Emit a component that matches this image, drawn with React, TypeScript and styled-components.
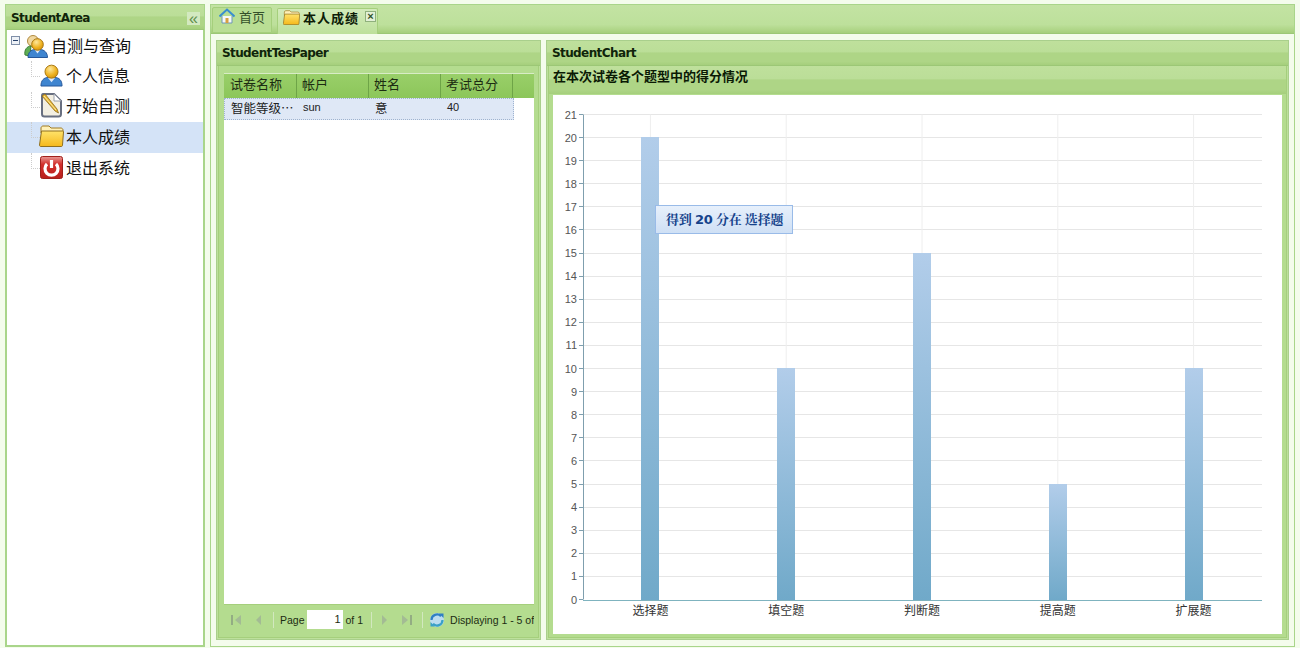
import React from 'react';
import styled, { createGlobalStyle } from 'styled-components';

const CJK = '"Noto Sans CJK SC", "Liberation Sans", sans-serif';
const BOLD_CJK = '"DejaVu Sans", "Noto Serif CJK SC", "Noto Sans CJK SC", sans-serif';

const GlobalStyle = createGlobalStyle`
	html, body {
		margin: 0;
		padding: 0;
		background: #f4fcec;
	}
	* {
		box-sizing: border-box;
	}
`;

// ---- icons ----

function UserIcon({ size = 23 }: { size?: number }): JSX.Element {
	return (
		<svg width={size} height={size} viewBox="0 0 24 24">
			<defs>
				<radialGradient id="headFill" cx="0.4" cy="0.3" r="0.8">
					<stop offset="0" stopColor="#fde79a" />
					<stop offset="0.6" stopColor="#eeb11e" />
					<stop offset="1" stopColor="#c98a10" />
				</radialGradient>
			</defs>
			<path d="M1 23c0-6 3-9 8-9h6c5 0 8 3 8 9z" fill="#3f85d0" stroke="#26579a" />
			<path d="M8 14l4 5 4-5z" fill="#dfeafa" />
			<circle cx="12" cy="8" r="6.800" fill="url(#headFill)" stroke="#a8760f" />
		</svg>
	);
}

function GroupIcon(): JSX.Element {
	return (
		<svg width={24} height={23} viewBox="0 0 24 23">
			<circle cx="9" cy="6" r="5.500" fill="#f0d8a0" stroke="#b08a40" />
			<path d="M1 20c-1-5 2-9 6-9l-1 10z" fill="#5fae55" stroke="#3b7d35" />
			<path d="M4 22.500c0-5 3-8 7-8h5c4 0 7.500 3 7.500 8z" fill="#3f85d0" stroke="#26579a" />
			<path d="M10.500 14.500l3 4 3-4z" fill="#dfeafa" />
			<circle cx="13.500" cy="9.500" r="5.800" fill="url(#headFill)" stroke="#a8760f" />
		</svg>
	);
}

function NoteIcon(): JSX.Element {
	return (
		<svg width={23} height={25} viewBox="0 0 23 25">
			<path d="M3 1h11l7 7v13c0 1.500-1 2.500-2.500 2.500h-14C3 23.500 2 22.500 2 21V3c0-1 .5-2 1-2z" fill="#f3efe2" stroke="#686f80" strokeWidth="2" />
			<path d="M14 1v7h7z" fill="#fff" stroke="#9aa0ac" />
			<path d="M2 3l13 15 3.500 2-1.500-4L5 1z" fill="#e8b732" stroke="#8d6a1c" strokeWidth="0.800" />
			<path d="M4 3l12 14" stroke="#fbe9a8" />
		</svg>
	);
}

function FolderIcon({ width = 25, height = 22 }: { width?: number; height?: number }): JSX.Element {
	return (
		<svg width={width} height={height} viewBox="0 0 25 22" style={{ flex: 'none' }}>
			<defs>
				<linearGradient id="folderFill" x1="0" y1="0" x2="0" y2="1">
					<stop offset="0" stopColor="#ffe36a" />
					<stop offset="1" stopColor="#f5b81c" />
				</linearGradient>
			</defs>
			<path d="M2 5V3c0-1 1-2 2-2h6l2 2h10c1 0 2 1 2 2v3H2z" fill="#fff1b8" stroke="#a07a22" />
			<path d="M2.500 6h21c.8 0 1 .5 1 1l-1 13c0 1-.5 1.500-1.500 1.500H2c-1 0-1.500-.5-1.500-1.500z" fill="url(#folderFill)" stroke="#8f6f20" />
		</svg>
	);
}

function PowerIcon(): JSX.Element {
	return (
		<svg width={23} height={23} viewBox="0 0 23 23">
			<defs>
				<linearGradient id="powerFill" x1="0" y1="0" x2="0" y2="1">
					<stop offset="0" stopColor="#e89a96" />
					<stop offset="0.35" stopColor="#d2302c" />
					<stop offset="1" stopColor="#b81f1c" />
				</linearGradient>
			</defs>
			<rect x="0.500" y="0.500" width="22" height="22" rx="2" fill="url(#powerFill)" stroke="#a0201c" />
			<path d="M7 8a6.500 6.500 0 1 0 9 0" fill="none" stroke="#fff" strokeWidth="3.200" />
			<path d="M11.500 4v8" stroke="#fff" strokeWidth="3.200" />
		</svg>
	);
}

function HomeIcon(): JSX.Element {
	return (
		<svg width={16} height={16} viewBox="0 0 16 16" style={{ flex: 'none' }}>
			<path d="M3 8v7h10V8" fill="#f5f8fb" stroke="#6f95b5" />
			<path d="M0.500 8.500 8 1.500l7.500 7" fill="none" stroke="#3a8fd0" strokeWidth="2" />
			<rect x="6.500" y="10" width="3" height="5" fill="#d8a040" />
		</svg>
	);
}

function ToolGlyph({ mirror }: { mirror?: boolean }): JSX.Element {
	return (
		<PagerIcon viewBox="0 0 14 14" $mirror={mirror}>
			<path d="M3 2v10" stroke="#93ad83" strokeWidth="2" />
			<path d="M12 2 6 7l6 5z" fill="#a3bb94" />
		</PagerIcon>
	);
}

function StepGlyph({ mirror }: { mirror?: boolean }): JSX.Element {
	return (
		<PagerIcon viewBox="0 0 14 14" $mirror={mirror}>
			<path d="M10 2 5 7l5 5z" fill="#a3bb94" />
		</PagerIcon>
	);
}

function RefreshIcon(): JSX.Element {
	return (
		<svg width={16} height={16} viewBox="0 0 16 16" style={{ flex: 'none' }}>
			<circle cx="8" cy="8" r="7" fill="#bcdcf0" />
			<path d="M2.500 8a5.500 5.500 0 0 1 9.500-3.800" fill="none" stroke="#2f7fc4" strokeWidth="2.200" />
			<path d="M10 1.500h4.500v4.500z" fill="#2f7fc4" />
			<path d="M13.500 8A5.500 5.500 0 0 1 4 11.800" fill="none" stroke="#3aa0c8" strokeWidth="2.200" />
			<path d="M6 14.500H1.500V10z" fill="#3aa0c8" />
		</svg>
	);
}

// ---- column chart ----

const chartData = [
	{ name: '选择题', score: 20 },
	{ name: '填空题', score: 10 },
	{ name: '判断题', score: 15 },
	{ name: '提高题', score: 5 },
	{ name: '扩展题', score: 10 },
];

const AXIS_X = 30;
const AXIS_RIGHT = 709;
const AXIS_TOP = 19.500;
const AXIS_BOTTOM = 504.500;
const STEP_X = (AXIS_RIGHT - AXIS_X) / 5;
const BAR_WIDTH = 18;

function yFor(value: number): number {
	return AXIS_BOTTOM - (value / 21) * (AXIS_BOTTOM - AXIS_TOP);
}

function ScoreChart(): JSX.Element {
	const ticks = Array.from({ length: 22 }, (_, i) => i);

	return (
		<svg width={729} height={539} viewBox="0 0 729 539" style={{ display: 'block' }}>
			<defs>
				<linearGradient id="columnFill" x1="0" y1="0" x2="0" y2="1">
					<stop offset="0" stopColor="#b2cdea" />
					<stop offset="1" stopColor="#70a9c9" />
				</linearGradient>
			</defs>
			{ticks.slice(1).map((t) => (
				<line key={t} x1={AXIS_X} x2={AXIS_RIGHT} y1={Math.floor(yFor(t)) + 0.5} y2={Math.floor(yFor(t)) + 0.5} stroke="#e6e6e6" />
			))}
			{chartData.map((d, i) => (
				<line
					key={d.name}
					x1={AXIS_X + STEP_X * (i + 0.5) - 0.5}
					x2={AXIS_X + STEP_X * (i + 0.5) - 0.5}
					y1={AXIS_TOP}
					y2={AXIS_BOTTOM}
					stroke="#eeeeee"
				/>
			))}
			{chartData.map((d, i) => (
				<rect
					key={d.name}
					x={Math.round(AXIS_X + STEP_X * (i + 0.5) - BAR_WIDTH / 2 - 0.5)}
					y={Math.floor(yFor(d.score))}
					width={BAR_WIDTH}
					height={Math.round(AXIS_BOTTOM) - Math.floor(yFor(d.score))}
					fill="url(#columnFill)"
				/>
			))}
			<line x1={AXIS_X + 0.5} x2={AXIS_X + 0.5} y1={AXIS_TOP} y2={AXIS_BOTTOM} stroke="#7f9fae" />
			<line x1={AXIS_X} x2={AXIS_RIGHT} y1={Math.round(AXIS_BOTTOM) + 0.5} y2={Math.round(AXIS_BOTTOM) + 0.5} stroke="#7fb3bf" />
			{ticks.map((t) => (
				<g key={t}>
					<line x1={AXIS_X - 4} x2={AXIS_X} y1={Math.floor(yFor(t)) + 0.5} y2={Math.floor(yFor(t)) + 0.5} stroke="#7f9fae" />
					<text x={AXIS_X - 6} y={yFor(t) + 4} textAnchor="end" fontSize="11" fontFamily="Liberation Sans" fill="#555">
						{t}
					</text>
				</g>
			))}
			{chartData.map((d, i) => (
				<text
					key={d.name}
					x={AXIS_X + STEP_X * (i + 0.5) - 0.5}
					y={AXIS_BOTTOM + 15}
					textAnchor="middle"
					fontSize="12"
					fontFamily={CJK}
					fill="#333"
				>
					{d.name}
				</text>
			))}
		</svg>
	);
}

// ---- page ----

const columns = [
	{ title: '试卷名称', cell: '智能等级…', cjk: true },
	{ title: '帐户', cell: 'sun' },
	{ title: '姓名', cell: '意', cjk: true },
	{ title: '考试总分', cell: '40' },
];

export default function App(): JSX.Element {
	return (
		<Layout>
			<GlobalStyle />
			<Sidebar>
				<SidebarHeader>
					<PanelTitle>StudentArea</PanelTitle>
					<CollapseButton>«</CollapseButton>
				</SidebarHeader>
				<TreeBody>
					<TreeRoot>
						<Toggle>
							<ToggleBar />
						</Toggle>
						<GroupIcon />
						<TreeLabel>自测与查询</TreeLabel>
					</TreeRoot>
					<TreeRow>
						<IconSlot>
							<UserIcon />
						</IconSlot>
						<TreeLabel>个人信息</TreeLabel>
					</TreeRow>
					<TreeRow>
						<IconSlot>
							<NoteIcon />
						</IconSlot>
						<TreeLabel>开始自测</TreeLabel>
					</TreeRow>
					<TreeRow $selected>
						<IconSlot>
							<FolderIcon />
						</IconSlot>
						<TreeLabel>本人成绩</TreeLabel>
					</TreeRow>
					<TreeRow>
						<IconSlot>
							<PowerIcon />
						</IconSlot>
						<TreeLabel>退出系统</TreeLabel>
					</TreeRow>
				</TreeBody>
			</Sidebar>

			<Workspace>
				<TabStrip>
					<Tab>
						<HomeIcon />
						<TabLabel>首页</TabLabel>
					</Tab>
					<Tab $active>
						<FolderIcon width={17} height={15} />
						<TabLabel $active>本人成绩</TabLabel>
						<TabClose>×</TabClose>
					</Tab>
				</TabStrip>
				<TabBody>
					<PaperPanel>
						<PanelHeader>
							<PanelTitle>StudentTesPaper</PanelTitle>
						</PanelHeader>
						<PaperBody>
							<GridBox>
								<GridHead>
									{columns.map((c) => (
										<HeadCell key={c.title}>{c.title}</HeadCell>
									))}
								</GridHead>
								<GridRows>
									<GridRow>
										{columns.map((c) => (
											<RowCell key={c.title} $cjk={c.cjk}>
												{c.cell}
											</RowCell>
										))}
									</GridRow>
								</GridRows>
							</GridBox>
							<Pager>
								<ToolGlyph />
								<StepGlyph />
								<PagerSep />
								<PagerText>Page</PagerText>
								<PageInput>1</PageInput>
								<PagerText>of 1</PagerText>
								<PagerSep $lead={6} />
								<StepGlyph mirror />
								<ToolGlyph mirror />
								<PagerSep />
								<RefreshIcon />
								<PagerStatus>Displaying 1 - 5 of 5</PagerStatus>
							</Pager>
						</PaperBody>
					</PaperPanel>

					<ChartPanel>
						<PanelHeader>
							<PanelTitle>StudentChart</PanelTitle>
						</PanelHeader>
						<ChartInner>
							<ChartHeader>在本次试卷各个题型中的得分情况</ChartHeader>
							<ChartBody>
								<ScoreChart />
								<ChartTip>得到 20 分在 选择题</ChartTip>
							</ChartBody>
						</ChartInner>
					</ChartPanel>
				</TabBody>
			</Workspace>
		</Layout>
	);
}

const headerGradient = `linear-gradient(#bfe09c 0%, #bbde98 45%, #aed586 50%, #aed586 85%, #a5cf7c 100%)`;

const Layout = styled.div`
	display: flex;
	height: 648px;
	width: 1300px;
	padding: 4px 5px 1px;
	gap: 5px;
	overflow: hidden;
	background: #f4fcec;
	font-family: 'Liberation Sans', sans-serif;
`;

const Sidebar = styled.aside`
	display: flex;
	flex-direction: column;
	flex: 0 0 200px;
	border: 2px solid #a9d58a;
	border-top: 1px solid #a9d58a;
	background: #fff;
`;

const SidebarHeader = styled.div`
	display: flex;
	align-items: center;
	justify-content: space-between;
	flex: 0 0 25px;
	margin: 0 -1px;
	padding: 2px 4px 0 5px;
	background: ${headerGradient};
	border-bottom: 1px solid #9cc776;
`;

const PanelTitle = styled.span`
	font-family: 'DejaVu Sans', sans-serif;
	font-size: 12px;
	font-weight: bold;
	letter-spacing: -0.6px;
	color: #10240a;
`;

const CollapseButton = styled.span`
	display: flex;
	align-items: center;
	justify-content: center;
	width: 13px;
	height: 13px;
	background: #d3e9c0;
	color: #5f8e4c;
	font-size: 16px;
	line-height: 11px;
`;

const TreeBody = styled.div`
	display: flex;
	flex-direction: column;
	flex: 1;
	padding-top: 1px;
`;

const TreeRoot = styled.div`
	display: flex;
	align-items: center;
	height: 30px;
	padding-left: 4px;
`;

const TreeRow = styled.div<{ $selected?: boolean }>`
	position: relative;
	display: flex;
	align-items: center;
	height: 30.6px;
	padding-left: 32px;
	background: ${(p) => (p.$selected ? '#d4e3f7' : 'transparent')};

	&::before {
		content: '';
		position: absolute;
		left: 24px;
		top: 0;
		width: 8px;
		height: 15px;
		border-left: 1px dotted #cccccc;
		border-bottom: 1px dotted #cccccc;
	}
`;

const IconSlot = styled.span`
	display: flex;
	align-items: center;
	justify-content: center;
	flex: 0 0 25px;
	margin-bottom: 2px;
`;

const TreeLabel = styled.span`
	margin: 0 0 3px 2px;
	font-family: ${CJK};
	font-size: 16px;
	line-height: 20px;
	color: #111;

	${TreeRoot} & {
		margin-left: 3px;
	}
`;

const Toggle = styled.span`
	position: relative;
	display: block;
	align-self: flex-start;
	flex: 0 0 9px;
	height: 9px;
	margin: 5px 4px 0 0;
	border: 1px solid #7f8fa8;
	background: #eef2f7;
`;

const ToggleBar = styled.span`
	position: absolute;
	left: 1px;
	top: 3px;
	width: 5px;
	height: 1px;
	background: #27406a;
`;

const Workspace = styled.main`
	display: flex;
	flex-direction: column;
	flex: 1;
	min-width: 0;
	border: 1px solid #a9d58a;
`;

const TabStrip = styled.div`
	display: flex;
	align-items: flex-end;
	flex: 0 0 29px;
	padding-left: 1px;
	gap: 5px;
	background: linear-gradient(#c3e3a3 0%, #bde09b 70%, #aed586 90%, #a5cf7c 100%);
	border-bottom: 1px solid #9cc776;
`;

const Tab = styled.div<{ $active?: boolean }>`
	display: flex;
	align-items: center;
	gap: ${(p) => (p.$active ? '3px' : '4px')};
	height: 26px;
	width: ${(p) => (p.$active ? '101px' : '60px')};
	margin-bottom: ${(p) => (p.$active ? '-1px' : '0')};
	padding: 0 0 8px ${(p) => (p.$active ? '5px' : '6px')};
	background: ${(p) => (p.$active ? 'linear-gradient(#d3ebbb, #bde09b)' : '#b9de94')};
	border: 1px solid #a5cf7c;
	border-bottom: ${(p) => (p.$active ? 'none' : '1px solid #a5cf7c')};
	border-radius: 2px 2px 0 0;
`;

const TabLabel = styled.span<{ $active?: boolean }>`
	flex: none;
	font-family: ${CJK};
	font-size: 13px;
	font-weight: ${(p) => (p.$active ? 'bold' : 'normal')};
	letter-spacing: ${(p) => (p.$active ? '1px' : '0')};
	white-space: nowrap;
	color: ${(p) => (p.$active ? '#0e1d08' : '#34502a')};
`;

const TabClose = styled.span`
	display: flex;
	align-items: center;
	justify-content: center;
	flex: 0 0 11px;
	height: 11px;
	margin: -3px 0 0 3px;
	border: 1px solid #8fb07c;
	background: #e2f0d6;
	color: #31502a;
	font-size: 11px;
	font-weight: bold;
	line-height: 8px;
`;

const TabBody = styled.div`
	display: flex;
	flex: 1;
	min-height: 0;
	gap: 5px;
	padding: 6px 5px 6px 5px;
	background: #f4fcec;
`;

const PanelHeader = styled.div`
	display: flex;
	align-items: center;
	flex: 0 0 25px;
	padding-left: 5px;
	background: ${headerGradient};
	border-bottom: 1px solid #9cc776;
`;

const PaperPanel = styled.section`
	display: flex;
	flex-direction: column;
	flex: 0 0 325px;
	border: 1px solid #a9cf8c;
	background: #bde09c;
`;

const PaperBody = styled.div`
	display: flex;
	flex-direction: column;
	flex: 1;
	min-height: 0;
	margin: 0 1px 1px;
	padding: 2px 4px 3px 5px;
	border: 1px solid #a5cf7c;
	border-top: none;
	background: #b4dc8f;
`;

const GridBox = styled.div`
	display: flex;
	flex-direction: column;
	flex: 1;
	min-height: 0;
	margin-top: 5px;
	border-top: 1px solid #d8ecc6;
	background: #fff;
`;

const GridHead = styled.div`
	display: flex;
	flex: 0 0 24px;
	padding-left: 1px;
	background: linear-gradient(#99cf69, #8cc65a);
`;

const HeadCell = styled.div`
	display: flex;
	align-items: center;
	width: 72px;
	padding: 0 0 5px 5px;
	border-right: 1px solid #6ea447;
	font-family: ${CJK};
	font-size: 13px;
	color: #1c2c12;
`;

const GridRows = styled.div`
	flex: 1;
`;

const GridRow = styled.div`
	display: flex;
	width: 290px;
	height: 22px;
	border: 1px dotted #9fb3cf;
	background: #dfe8f6;
`;

const RowCell = styled.div<{ $cjk?: boolean }>`
	display: flex;
	align-items: center;
	width: 72px;
	padding: 0 0 4px 6px;
	font-family: ${(p) => (p.$cjk ? CJK : "'Liberation Sans', sans-serif")};
	font-size: ${(p) => (p.$cjk ? '12.5px' : '11px')};
	color: #222;
	white-space: nowrap;
	overflow: hidden;
`;

const Pager = styled.div`
	display: flex;
	align-items: center;
	flex: 0 0 30px;
	width: 310px;
	padding-left: 5px;
	overflow: hidden;
	border-top: 1px solid #a5cf7c;
	background: #b4dc8f;
	white-space: nowrap;
`;

const PagerIcon = styled.svg<{ $mirror?: boolean }>`
	flex: none;
	width: 14px;
	height: 14px;
	margin-right: 8px;
	transform: ${(p) => (p.$mirror ? 'scaleX(-1)' : 'none')};
`;

const PagerSep = styled.span<{ $lead?: number }>`
	flex: 0 0 1px;
	height: 16px;
	margin: 0 6px 0 ${(p) => p.$lead ?? 0}px;
	background: #d2e8bf;
`;

const PagerText = styled.span`
	flex: none;
	font-size: 10.5px;
	color: #1c2c12;
	margin-right: 2px;
`;

const PagerStatus = styled(PagerText)`
	margin: 0 0 0 5px;
`;

const PageInput = styled.span`
	flex: 0 0 36px;
	height: 19px;
	margin-right: 3px;
	padding-right: 2px;
	background: #fff;
	text-align: right;
	font-size: 11px;
	line-height: 19px;
	color: #1c2c12;
`;

const ChartPanel = styled.section`
	display: flex;
	flex-direction: column;
	flex: 1;
	min-width: 0;
	border: 1px solid #a9cf8c;
	background: #bde09c;
`;

const ChartInner = styled.div`
	display: flex;
	flex-direction: column;
	flex: 1;
	min-height: 0;
	margin: 0 1px 1px;
	padding: 0 4px 3px 4px;
	border: 1px solid #a5cf7c;
	border-top: none;
	background: #b4dc8f;
`;

const ChartHeader = styled.div`
	display: flex;
	align-items: center;
	flex: 0 0 28px;
	margin: 0 -4px;
	padding: 0 0 9px 4px;
	background: ${headerGradient};
	font-family: ${CJK};
	font-size: 13px;
	font-weight: bold;
	color: #0b1a05;
`;

const ChartBody = styled.div`
	position: relative;
	flex: 1;
	min-height: 0;
	margin-top: 1px;
	background: #fff;
`;

const ChartTip = styled.div`
	position: absolute;
	left: 102px;
	top: 110px;
	width: 138px;
	height: 29px;
	padding: 0 0 2px 10px;
	border: 1px solid #99bbe8;
	background: linear-gradient(#e7f0fb, #cfe0f5);
	font-family: ${BOLD_CJK};
	font-size: 13px;
	font-weight: bold;
	letter-spacing: -0.2px;
	word-spacing: -1px;
	line-height: 27px;
	white-space: nowrap;
	color: #15428b;
`;
